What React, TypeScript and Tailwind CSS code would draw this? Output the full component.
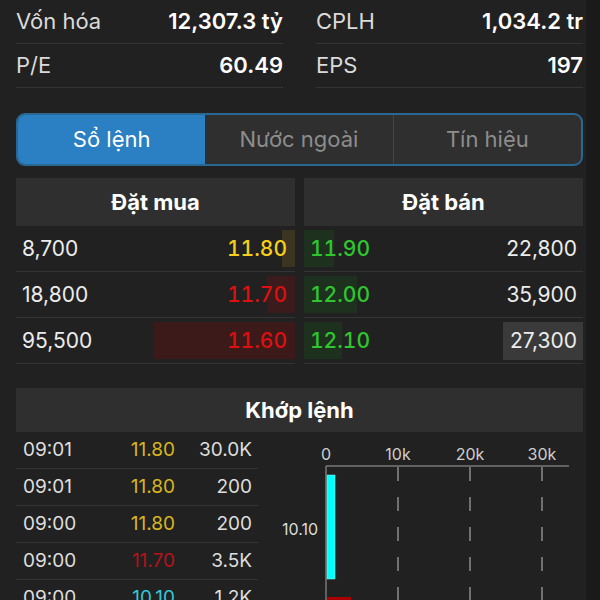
import React from "react";

const stats = [
  [
    { l: "Vốn hóa", v: "12,307.3 tỷ" },
    { l: "P/E", v: "60.49" },
  ],
  [
    { l: "CPLH", v: "1,034.2 tr" },
    { l: "EPS", v: "197" },
  ],
];

const bids = [
  { vol: "8,700", price: "11.80", color: "text-[#f3cf1b]", bar: 13, barColor: "bg-[#3a3420]" },
  { vol: "18,800", price: "11.70", color: "text-[#dc1010]", bar: 28, barColor: "bg-[#3b1b1b]" },
  { vol: "95,500", price: "11.60", color: "text-[#dc1010]", bar: 141, barColor: "bg-[#3d1a1a]" },
];

const asks = [
  { vol: "22,800", price: "11.90", bar: 30, box: false },
  { vol: "35,900", price: "12.00", bar: 53, box: false },
  { vol: "27,300", price: "12.10", bar: 38, box: true },
];

const trades = [
  { t: "09:01", p: "11.80", c: "text-[#d8b51f]", v: "30.0K" },
  { t: "09:01", p: "11.80", c: "text-[#d8b51f]", v: "200" },
  { t: "09:00", p: "11.80", c: "text-[#d8b51f]", v: "200" },
  { t: "09:00", p: "11.70", c: "text-[#b3131b]", v: "3.5K" },
  { t: "09:00", p: "10.10", c: "text-[#33c8d8]", v: "1.2K" },
];

function Chart() {
  const font = "Inter, 'Noto Sans', sans-serif";
  return (
    <svg width="325" height="170" viewBox="0 0 325 170" className="block">
      {[
        [68, "0"],
        [140, "10k"],
        [212, "20k"],
        [284, "30k"],
      ].map(([x, s]) => (
        <text
          key={s as string}
          x={x as number}
          y={28}
          textAnchor="middle"
          fontSize="16"
          fill="#cfcfcf"
          fontFamily={font}
        >
          {s}
        </text>
      ))}
      <line x1="68" y1="34" x2="311" y2="34" stroke="#777" strokeWidth="1.5" />
      <line x1="68" y1="34" x2="68" y2="170" stroke="#777" strokeWidth="1.5" />
      {[140, 212, 284].map((x) => (
        <line
          key={x}
          x1={x}
          y1="35"
          x2={x}
          y2="170"
          stroke="#8a8a8a"
          strokeWidth="1.5"
          strokeDasharray="14 16"
        />
      ))}
      <rect x="69" y="43" width="8" height="104" fill="#00ffff" stroke="#7fd" strokeWidth="0.5" />
      <text x="60" y="103" textAnchor="end" fontSize="16" fill="#dcdcdc" fontFamily={font}>
        10.10
      </text>
      <rect x="69" y="165" width="24" height="10" fill="#a80000" />
    </svg>
  );
}

export default function App() {
  return (
    <div className="w-[600px] h-[600px] overflow-hidden flex bg-[#1a1a1a] font-['Inter','Noto_Sans',sans-serif]">
      <div className="w-[586px] h-[600px] shrink-0 bg-[#212121] pl-4 pr-[3px]">
        {/* stats */}
        <div className="grid grid-cols-2 gap-x-[33px]">
          {stats.map((col, ci) => (
            <div key={ci}>
              {col.map((r) => (
                <div
                  key={r.l}
                  className="h-[44px] border-b border-[#343434] flex items-center justify-between"
                >
                  <span className="text-[22px] text-[#dadada]">{r.l}</span>
                  <span className="text-[22px] font-semibold text-white">{r.v}</span>
                </div>
              ))}
            </div>
          ))}
        </div>

        {/* tabs */}
        <div className="mt-[25px] h-[53px] rounded-[9px] border-2 border-[#2a6894] bg-[#2f2f2f] flex overflow-hidden">
          <div className="flex-1 bg-[#2a80c2] flex items-center justify-center text-[22px] text-white">
            Sổ lệnh
          </div>
          <div className="flex-1 flex items-center justify-center text-[22px] text-[#8d8d8d]">
            Nước ngoài
          </div>
          <div className="flex-1 border-l border-[#454545] flex items-center justify-center text-[22px] text-[#8d8d8d]">
            Tín hiệu
          </div>
        </div>

        {/* headers */}
        <div className="mt-3 grid grid-cols-2 gap-x-[9px]">
          <div className="h-[48px] bg-[#2f2f2f] flex items-center justify-center text-[22px] font-bold text-white">
            Đặt mua
          </div>
          <div className="h-[48px] bg-[#2f2f2f] flex items-center justify-center text-[22px] font-bold text-white">
            Đặt bán
          </div>
        </div>

        {/* order book */}
        <div className="grid grid-cols-2 gap-x-[9px]">
          <div>
            {bids.map((b) => (
              <div
                key={b.vol}
                className="relative h-[46px] border-b border-[#343434] flex items-center justify-between pl-[6px] pr-2"
              >
                <div
                  className={`absolute right-0 top-[4px] bottom-[4px] ${b.barColor}`}
                  style={{ width: b.bar }}
                />
                <span className="relative text-[21px] text-[#ececec]">{b.vol}</span>
                <span className={`relative text-[21px] font-medium tabular-nums ${b.color}`}>
                  {b.price}
                </span>
              </div>
            ))}
          </div>
          <div>
            {asks.map((a) => (
              <div
                key={a.vol}
                className="relative h-[46px] border-b border-[#343434] flex items-center justify-between pl-[6px] pr-[6px]"
              >
                <div
                  className="absolute left-0 top-[4px] bottom-[4px] bg-[#1e311e]"
                  style={{ width: a.bar }}
                />
                {a.box && (
                  <div className="absolute right-0 top-[4px] bottom-[3px] w-[80px] bg-[#3a3a3a]" />
                )}
                <span className="relative text-[21px] font-medium tabular-nums text-[#2ec52e]">
                  {a.price}
                </span>
                <span className="relative text-[21px] text-[#ececec]">{a.vol}</span>
              </div>
            ))}
          </div>
        </div>

        {/* matched */}
        <div className="mt-[24px] h-[44px] bg-[#2f2f2f] flex items-center justify-center text-[22px] font-bold text-white">
          Khớp lệnh
        </div>
        <div className="flex">
          <div className="w-[242px] shrink-0">
            {trades.map((t, i) => (
              <div
                key={i}
                className="h-[37px] border-b border-[#343434] flex items-center text-[19px]"
              >
                <span className="flex-1 pl-[7px] text-[#dedede]">{t.t}</span>
                <span className={`w-[60px] text-right ${t.c}`}>{t.p}</span>
                <span className="w-[83px] text-right pr-[6px] text-[#dedede]">{t.v}</span>
              </div>
            ))}
          </div>
          <div className="flex-1">
            <Chart />
          </div>
        </div>
      </div>
      <div className="flex-1 bg-[#1a1a1a]" />
    </div>
  );
}
